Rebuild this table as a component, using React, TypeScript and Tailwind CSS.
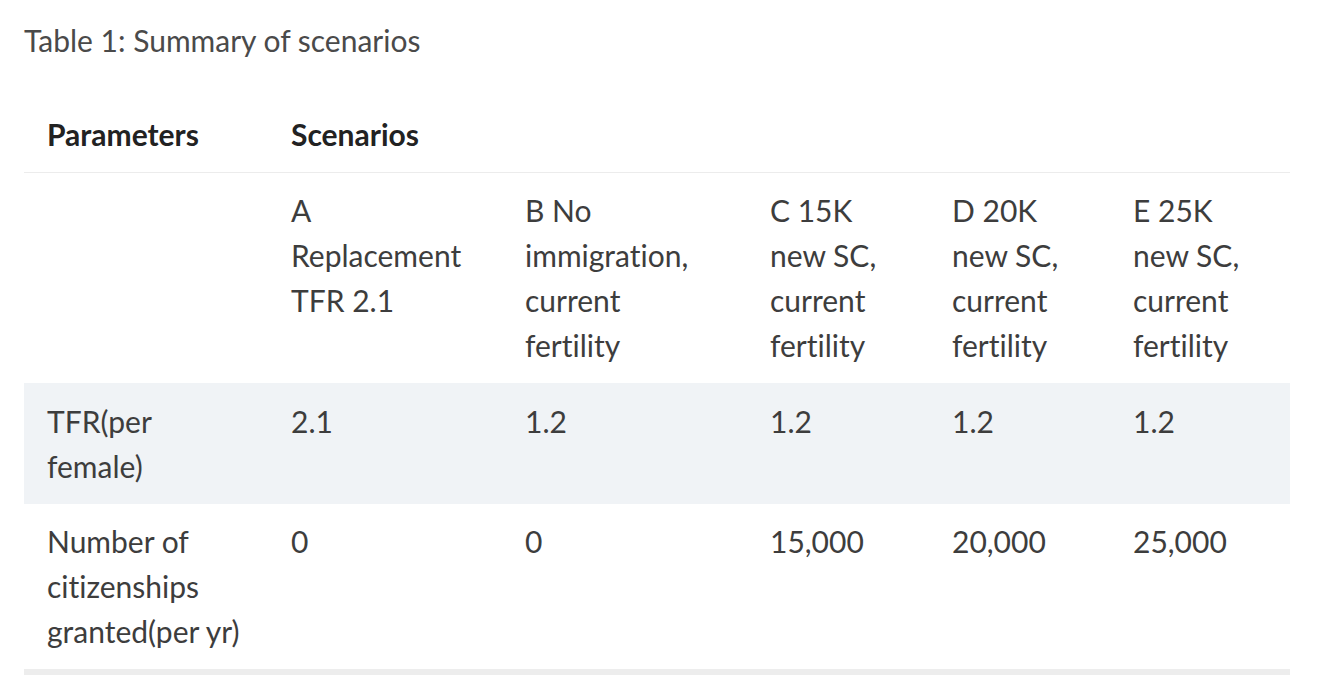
import React from 'react';

const cols = ['w-[244px]', 'w-[234px]', 'w-[245px]', 'w-[182px]', 'w-[181px]', 'w-[180px]'];

const scenarioNames = [
  '',
  'A Replacement TFR 2.1',
  'B No immigration, current fertility',
  'C 15K new SC, current fertility',
  'D 20K new SC, current fertility',
  'E 25K new SC, current fertility',
];

const rows: { cells: string[]; shaded: boolean }[] = [
  { cells: ['TFR(per female)', '2.1', '1.2', '1.2', '1.2', '1.2'], shaded: true },
  { cells: ['Number of citizenships granted(per yr)', '0', '0', '15,000', '20,000', '25,000'], shaded: false },
];

// column B wraps a little earlier in the source
const cellPad = (i: number) => (i === 2 ? 'pl-[23px] pr-[30px]' : 'px-[23px]');

export default function App() {
  return (
    <div className="min-h-screen bg-white pl-[24px] pt-[18px] font-['Lato','Liberation_Sans',sans-serif] text-[#3d3d3d] [font-variant-ligatures:none]">
      <p className="text-[30px] leading-[45px] text-[#4a4a4a]">Table 1: Summary of scenarios</p>

      <table className="mt-[34px] w-[1266px] table-fixed border-collapse text-[30px] leading-[45px]">
        <colgroup>
          {cols.map((c, i) => (
            <col key={i} className={c} />
          ))}
        </colgroup>
        <thead>
          <tr className="border-b border-[#ececec]">
            <th className="px-[23px] py-[15px] text-left align-top font-bold text-[#222]">Parameters</th>
            <th colSpan={5} className="px-[23px] py-[15px] text-left align-top font-bold text-[#222]">
              Scenarios
            </th>
          </tr>
        </thead>
        <tbody>
          <tr>
            {scenarioNames.map((name, i) => (
              <td key={i} className={`${cellPad(i)} py-[15px] align-top`}>
                {name}
              </td>
            ))}
          </tr>
          {rows.map((row, r) => (
            <tr key={r} className={row.shaded ? 'bg-[#f0f3f6]' : 'border-b-[6px] border-[#ededed]'}>
              {row.cells.map((cell, i) => (
                <td key={i} className={`${cellPad(i)} ${row.shaded ? 'py-[15.5px]' : 'py-[15px]'} align-top`}>
                  {cell}
                </td>
              ))}
            </tr>
          ))}
        </tbody>
      </table>
    </div>
  );
}
